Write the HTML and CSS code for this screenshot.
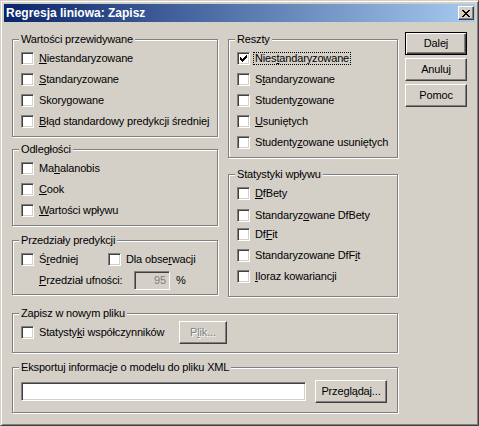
FILE: index.html
```html
<!DOCTYPE html>
<html lang="pl">
<head>
<meta charset="utf-8">
<title>Regresja liniowa: Zapisz</title>
<link rel="stylesheet" href="styles.css">
</head>
<body>
<div class="window">
  <div class="titlebar">
    <span class="title">Regresja liniowa: Zapisz</span>
    <span class="close-btn"><svg width="8" height="7" viewBox="0 0 8 7"><path d="M0 0h2v1H0zM6 0h2v1H6zM1 1h2v1H1zM5 1h2v1H5zM2 2h4v1H2zM3 3h2v1H3zM2 4h4v1H2zM1 5h2v1H1zM5 5h2v1H5zM0 6h2v1H0zM6 6h2v1H6z" fill="#000"/></svg></span>
  </div>
  <div class="client">
    <div class="main">
      <div class="cols">
        <div class="col col-left">
          <fieldset class="group g-pred">
            <legend>Wartości przewidywane</legend>
            <div class="rows">
              <div class="cb-row"><span class="cb"></span><span><u>N</u>iestandaryzowane</span></div>
              <div class="cb-row"><span class="cb"></span><span><u>S</u>tandaryzowane</span></div>
              <div class="cb-row"><span class="cb"></span><span>Skorygowane</span></div>
              <div class="cb-row"><span class="cb"></span><span><u>B</u>łąd standardowy predykcji średniej</span></div>
            </div>
          </fieldset>
          <fieldset class="group g-dist">
            <legend>Odległości</legend>
            <div class="rows">
              <div class="cb-row"><span class="cb"></span><span>Ma<u>h</u>alanobis</span></div>
              <div class="cb-row"><span class="cb"></span><span><u>C</u>ook</span></div>
              <div class="cb-row"><span class="cb"></span><span><u>W</u>artości wpływu</span></div>
            </div>
          </fieldset>
          <fieldset class="group g-int">
            <legend>Przedziały predykcji</legend>
            <div class="cb-row">
              <span class="cb"></span><span class="mean-label">Ś<u>r</u>edniej</span>
              <span class="cb"></span><span>Dla obse<u>r</u>wacji</span>
            </div>
            <div class="conf-row">
              <span class="conf-label"><u>P</u>rzedział ufności:</span>
              <span class="field field-disabled">95</span>
              <span class="pct">%</span>
            </div>
          </fieldset>
        </div>
        <div class="col col-mid">
          <fieldset class="group g-res">
            <legend>Reszty</legend>
            <div class="rows">
              <div class="cb-row"><span class="cb"><svg width="7" height="7" viewBox="0 0 7 7"><path d="M0 2h1v3H0zM1 3h1v3H1zM2 4h1v3H2zM3 3h1v3H3zM4 2h1v3H4zM5 1h1v3H5zM6 0h1v3H6z" fill="#000"/></svg></span><span class="focus">Nies<u>t</u>andaryzowane</span></div>
              <div class="cb-row"><span class="cb"></span><span>S<u>t</u>andaryzowane</span></div>
              <div class="cb-row"><span class="cb"></span><span>Studenty<u>z</u>owane</span></div>
              <div class="cb-row"><span class="cb"></span><span><u>U</u>suniętych</span></div>
              <div class="cb-row"><span class="cb"></span><span>Studenty<u>z</u>owane usuniętych</span></div>
            </div>
          </fieldset>
          <fieldset class="group g-infl">
            <legend>Statystyki wpływu</legend>
            <div class="rows">
              <div class="cb-row"><span class="cb"></span><span><u>D</u>fBety</span></div>
              <div class="cb-row lower"><span class="cb"></span><span>Standaryz<u>o</u>wane DfBety</span></div>
              <div class="cb-row raised"><span class="cb"></span><span>Df<u>F</u>it</span></div>
              <div class="cb-row"><span class="cb"></span><span>Standaryzowane DfF<u>i</u>t</span></div>
              <div class="cb-row"><span class="cb"></span><span><u>I</u>loraz kowariancji</span></div>
            </div>
          </fieldset>
        </div>
      </div>
      <fieldset class="group g-save">
        <legend>Zapisz w nowym pliku</legend>
        <div class="cb-row tall">
          <span class="cb"></span><span class="coef-label">Statysty<u>k</u>i współczynników</span>
          <span class="btn btn-file disabled">P<u>l</u>ik...</span>
        </div>
      </fieldset>
      <fieldset class="group g-xml">
        <legend>Eksportuj informacje o modelu do pliku XML</legend>
        <div class="xml-row">
          <span class="field field-xml"></span>
          <span class="btn btn-browse">Przeglądaj...</span>
        </div>
      </fieldset>
    </div>
    <div class="buttons">
      <span class="btn btn-side btn-default">Dalej</span>
      <span class="btn btn-side">Anuluj</span>
      <span class="btn btn-side">Pomoc</span>
    </div>
  </div>
</div>
</body>
</html>
```
FILE: styles.css
```css
* { box-sizing: border-box; }
html, body { margin: 0; padding: 0; }
body {
  background: #D4D0C8;
  font-family: "Liberation Sans", Arial, sans-serif;
  font-size: 11px;
  line-height: 13px;
  letter-spacing: -0.15px;
  color: #000;
}
u { text-decoration: underline; text-underline-offset: 1px; }

.window {
  width: 479px;
  height: 426px;
  background: #D4D0C8;
  border: 1px solid;
  border-color: #D4D0C8 #404040 #404040 #D4D0C8;
  box-shadow: inset 1px 1px #fff, inset -1px -1px #808080;
  padding: 3px;
}

.titlebar {
  height: 18px;
  display: flex;
  align-items: center;
  justify-content: space-between;
  padding-left: 2px;
  background: linear-gradient(to right, #0A246A, #A6CAF0);
  color: #fff;
  font-weight: bold;
  font-size: 12px;
  letter-spacing: 0;
}
.close-btn {
  width: 16px;
  height: 14px;
  margin-right: 1px;
  display: flex;
  align-items: center;
  justify-content: center;
  background: #D4D0C8;
  border: 1px solid;
  border-color: #fff #404040 #404040 #fff;
  box-shadow: inset -1px -1px #808080;
}
.close-btn svg { display: block; }

.client {
  display: flex;
  align-items: flex-start;
  padding: 10px 0 0 8px;
}
.main {
  width: 386px;
  margin-top: 1px;
  display: flex;
  flex-direction: column;
}
.cols {
  display: flex;
  align-items: flex-start;
  gap: 10px;
}
.col { display: flex; flex-direction: column; }
.col-left { width: 206px; }
.col-mid { width: 170px; }

.group {
  margin: 0;
  min-width: 0;
  padding: 6px 8px 8px;
  border: 1px solid #808080;
  box-shadow: inset 1px 1px #fff, 1px 1px #fff;
}
.group legend {
  padding: 0 2px;
  margin-left: -2px;
  line-height: 13px;
  background: #D4D0C8;
}
.g-dist { margin-top: 6px; }
.g-int { margin-top: 8px; padding-bottom: 4px; }
.g-infl { margin-top: 10px; padding-bottom: 13px; }
.g-save { margin-top: 10px; padding-top: 1px; }
.g-xml { margin-top: 8px; padding-bottom: 9px; }

.rows { display: flex; flex-direction: column; gap: 8px; }
.cb-row {
  display: flex;
  align-items: center;
  gap: 5px;
  height: 13px;
  white-space: nowrap;
}
.cb-row.lower { margin-top: 1px; }
.cb-row.raised { margin-top: -2px; }
.cb-row.tall { height: 23px; }

.cb {
  flex: none;
  width: 13px;
  height: 13px;
  display: flex;
  align-items: center;
  justify-content: center;
  background: #fff;
  border: 1px solid;
  border-color: #808080 #fff #fff #808080;
  box-shadow: inset 1px 1px #404040, inset -1px -1px #D4D0C8;
}
.cb svg { display: block; }

.focus {
  border: 1px dotted #000;
  padding: 0 1px;
  margin-left: -2px;
  line-height: 11px;
}

.mean-label { width: 64px; }

.conf-row {
  display: flex;
  align-items: center;
  height: 19px;
  margin-top: 5px;
  padding-left: 18px;
}
.conf-label { width: 95px; }
.pct { margin-left: 6px; }

.field {
  display: block;
  height: 19px;
  background: #fff;
  border: 1px solid;
  border-color: #808080 #fff #fff #808080;
  box-shadow: inset 1px 1px #404040, inset -1px -1px #D4D0C8;
}
.field-disabled {
  width: 36px;
  background: #D4D0C8;
  color: #808080;
  text-align: right;
  padding: 2px 3px 0 0;
}
.field-xml { width: 285px; }

.xml-row {
  display: flex;
  align-items: center;
  gap: 9px;
  height: 23px;
}

.btn {
  display: flex;
  align-items: center;
  justify-content: center;
  height: 23px;
  background: #D4D0C8;
  border: 1px solid;
  border-color: #fff #404040 #404040 #fff;
  box-shadow: inset -1px -1px #808080;
  white-space: nowrap;
}
.btn-file { width: 48px; }
.coef-label { width: 135px; }
.btn-browse { width: 72px; }
.disabled {
  color: #808080;
  text-shadow: 1px 1px 0 #fff;
}

.buttons {
  display: flex;
  flex-direction: column;
  gap: 3px;
  margin-left: 7px;
}
.btn-side { width: 62px; }
.btn-default {
  border-color: #000;
  box-shadow: inset 1px 1px #fff, inset -1px -1px #404040, inset -2px -2px #808080;
}
```
